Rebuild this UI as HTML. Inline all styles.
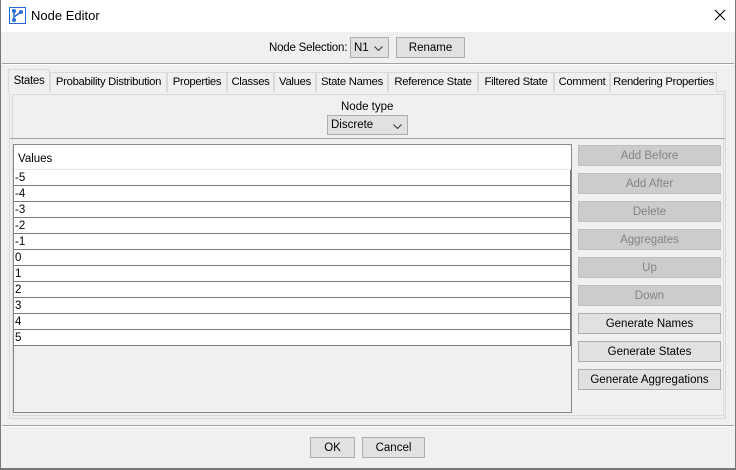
<!DOCTYPE html>
<html><head><style>
*{box-sizing:border-box;margin:0;padding:0}
body{width:736px;height:470px;background:#f0f0f0;font-family:"Liberation Sans",sans-serif;font-size:11.5px;color:#000;position:relative;overflow:hidden}
.a{position:absolute;white-space:nowrap}
.btn{position:absolute;background:#e1e1e1;border:1px solid #adadad;text-align:center;line-height:20px;font-size:11.5px;white-space:nowrap}
.dis{background:#cccccc;border-color:#bfbfbf;color:#838383}
.tab{position:absolute;top:72px;height:20px;border:1px solid #d9d9d9;border-bottom:none;background:#f0f0f0;line-height:19px;text-align:center;font-size:11.3px;white-space:nowrap;overflow:hidden;letter-spacing:-0.3px}
.row{position:absolute;left:0;width:557px;height:16px;border-bottom:1px solid #7a7a7a;background:#fff;line-height:16px;padding-left:1px}
.chev{position:absolute;right:5px;top:8px}
</style></head><body>
<div class="a" style="left:0;top:0;width:736px;height:32px;background:#fff"></div>
<svg class="a" style="left:9px;top:7px" width="17" height="17" viewBox="0 0 17 17"><rect x="0.5" y="0.5" width="16" height="16" fill="#fff" stroke="#2a6ad8"/><path d="M5 4 L5 13 M5 10 L12 5" stroke="#2a6ad8" stroke-width="1.5" fill="none"/><circle cx="5" cy="4" r="2" fill="#2a6ad8"/><circle cx="5" cy="13" r="2" fill="#2a6ad8"/><circle cx="12" cy="5" r="2" fill="#2a6ad8"/></svg>
<div class="a" style="left:31px;top:8px;font-size:13px">Node Editor</div>
<svg class="a" style="left:714px;top:9px" width="12" height="12" viewBox="0 0 12 12"><path d="M1 1 L11 11 M11 1 L1 11" stroke="#000" stroke-width="1.1"/></svg>
<div class="a" style="left:0;top:0;width:1px;height:470px;background:#777"></div>
<div class="a" style="left:735px;top:0;width:1px;height:470px;background:#777"></div>
<div class="a" style="left:0;top:468px;width:736px;height:2px;background:#777"></div>

<div class="a" style="left:269px;top:42px;letter-spacing:-0.2px">Node Selection:</div>
<div class="btn" style="left:350px;top:37px;width:39px;height:21px;text-align:left;padding-left:3px">N1<svg class="chev" width="9" height="5" viewBox="0 0 9 5"><path d="M0.5 0.5 L4.5 4.5 L8.5 0.5" stroke="#333" fill="none"/></svg></div>
<div class="btn" style="left:396px;top:37px;width:69px;height:21px">Rename</div>
<div class="a" style="left:2px;top:63px;width:732px;height:1px;background:#a0a0a0"></div>
<div class="a" style="left:2px;top:64px;width:732px;height:1px;background:#fff"></div>

<div class="a" style="left:9px;top:91px;width:717px;height:328px;border:1px solid #d9d9d9;background:#f0f0f0"></div>
<div class="tab" style="left:50px;width:117px">Probability Distribution</div>
<div class="tab" style="left:167px;width:60px">Properties</div>
<div class="tab" style="left:227px;width:47px">Classes</div>
<div class="tab" style="left:274px;width:42px">Values</div>
<div class="tab" style="left:316px;width:72px">State Names</div>
<div class="tab" style="left:388px;width:90px">Reference State</div>
<div class="tab" style="left:478px;width:76px">Filtered State</div>
<div class="tab" style="left:554px;width:56px">Comment</div>
<div class="tab" style="left:610px;width:107px">Rendering Properties</div>
<div class="tab" style="left:8px;top:69px;width:42px;height:24px;line-height:22px;font-size:11.5px">States</div>
<div class="a" style="left:12px;top:94px;width:712px;height:322px;border:1px solid #d9d9d9"></div>

<div class="a" style="left:341px;top:101px">Node type</div>
<div class="btn" style="left:327px;top:115px;width:81px;height:20px;text-align:left;padding-left:3px;line-height:19px">Discrete<svg class="chev" width="9" height="5" viewBox="0 0 9 5"><path d="M0.5 0.5 L4.5 4.5 L8.5 0.5" stroke="#333" fill="none"/></svg></div>
<div class="a" style="left:10px;top:138px;width:715px;height:1px;background:#a0a0a0"></div>

<div class="a" style="left:13px;top:144px;width:559px;height:269px;border:1px solid #828790;background:#f0f0f0">
<div class="a" style="left:0;top:0;width:557px;height:25px;background:#fff;border-bottom:1px solid #e5e5e5;padding:8px 0 0 4px">Values</div>
<div class="a" style="left:0;top:25px;width:557px;height:176px">
<div class="row" style="top:0">-5</div><div class="row" style="top:16px">-4</div><div class="row" style="top:32px">-3</div><div class="row" style="top:48px">-2</div><div class="row" style="top:64px">-1</div><div class="row" style="top:80px">0</div><div class="row" style="top:96px">1</div><div class="row" style="top:112px">2</div><div class="row" style="top:128px">3</div><div class="row" style="top:144px">4</div><div class="row" style="top:160px">5</div>
</div>
<div class="a" style="left:556px;top:25px;width:1px;height:176px;background:#7a7a7a"></div>
</div>

<div class="btn dis" style="left:578px;top:145px;width:143px;height:21px">Add Before</div>
<div class="btn dis" style="left:578px;top:173px;width:143px;height:21px">Add After</div>
<div class="btn dis" style="left:578px;top:201px;width:143px;height:21px">Delete</div>
<div class="btn dis" style="left:578px;top:229px;width:143px;height:21px">Aggregates</div>
<div class="btn dis" style="left:578px;top:257px;width:143px;height:21px">Up</div>
<div class="btn dis" style="left:578px;top:285px;width:143px;height:21px">Down</div>
<div class="btn" style="left:578px;top:313px;width:143px;height:21px">Generate Names</div>
<div class="btn" style="left:578px;top:341px;width:143px;height:21px">Generate States</div>
<div class="btn" style="left:578px;top:369px;width:143px;height:21px">Generate Aggregations</div>

<div class="a" style="left:2px;top:425px;width:732px;height:1px;background:#a0a0a0"></div>
<div class="a" style="left:2px;top:426px;width:732px;height:1px;background:#fff"></div>
<div class="btn" style="left:310px;top:437px;width:45px;height:21px">OK</div>
<div class="btn" style="left:362px;top:437px;width:63px;height:21px">Cancel</div>
</body></html>
